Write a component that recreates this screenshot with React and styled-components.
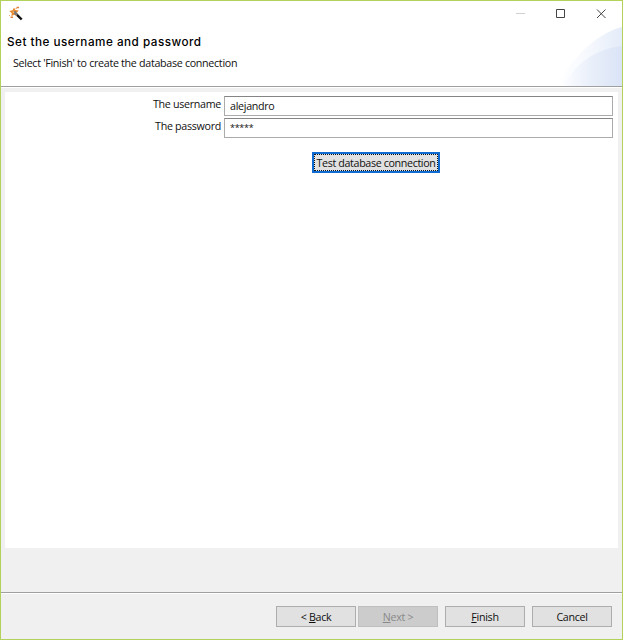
import React, { useState } from 'react';
import styled, { createGlobalStyle } from 'styled-components';

const GlobalStyle = createGlobalStyle`
  * {
    box-sizing: border-box;
  }

  body {
    margin: 0;
    background: #f0f0f0;
  }
`;

const Window = styled.div`
  display: flex;
  flex-direction: column;
  width: 623px;
  height: 640px;
  border: 1px solid #b2d25c;
  background: #f0f0f0;
  color: #101010;
  font-family: 'Open Sans', 'Noto Sans', sans-serif;
  font-size: 10.7px;
  letter-spacing: -0.3px;
`;

const Header = styled.header`
  position: relative;
  height: 86px;
  flex: none;
  background: #fff;
  border-bottom: 1px solid #a0a0a0;
  box-shadow: 0 1px 0 #fff;
`;

const Swoosh = styled.svg`
  position: absolute;
  right: 0;
  bottom: 0;
`;

const TitleBar = styled.div`
  display: flex;
  align-items: flex-start;
  justify-content: space-between;
  height: 33px;
  padding: 4px 15px 0 7px;
`;

const WindowControls = styled.div`
  display: flex;
  gap: 28px;
  padding-top: 3px;
`;

const ControlButton = styled.button`
  display: flex;
  width: 12px;
  height: 12px;
  padding: 0;
  border: 0;
  background: none;
  color: ${(props) => (props.disabled ? '#d0d0d0' : '#444')};
`;

const Title = styled.h1`
  margin: 0 0 0 6px;
  font-family: Inter, 'Liberation Sans', sans-serif;
  font-size: 11.7px;
  font-weight: 500;
  line-height: 16px;
  letter-spacing: 0.5px;
  color: #000;
  white-space: nowrap;
`;

const Subtitle = styled.p`
  margin: 5px 0 0 12px;
  line-height: 16px;
  white-space: nowrap;
`;

const Content = styled.main`
  height: 456px;
  flex: none;
  margin: 5px 4px 0;
  padding: 4px 5px 0 4px;
  background: #fff;
`;

const Field = styled.label`
  display: flex;
  justify-content: flex-end;
  gap: 3px;
  height: 22px;
`;

const FieldLabel = styled.span`
  line-height: 17px;
`;

const Input = styled.input`
  width: 389px;
  height: 20px;
  padding: ${(props) => (props.$masked ? '0 5px 2px' : '0 5px')};
  border: 1px solid #ababab;
  border-top-color: #858585;
  outline: 0;
  background: #fff;
  color: #101010;
  font: inherit;
  font-size: ${(props) => (props.$masked ? '9px' : 'inherit')};
  letter-spacing: ${(props) => (props.$masked ? '-0.3px' : 'inherit')};
`;

const TestRow = styled.div`
  display: flex;
  padding: 12px 0 0 303px;
`;

const TestButton = styled.button`
  width: 128px;
  height: 21px;
  padding: 0;
  border: 2px solid #0f6bd2;
  outline: 1px dotted #111;
  outline-offset: -3px;
  background: #e1e1e1;
  color: #101010;
  font: inherit;
  letter-spacing: -0.35px;
  white-space: nowrap;
`;

const Footer = styled.footer`
  display: flex;
  justify-content: flex-end;
  gap: 7px;
  height: 47px;
  flex: none;
  margin-top: auto;
  padding: 13px 10px 0 0;
  border-top: 1px solid #a0a0a0;
  box-shadow: inset 0 1px 0 #fff;
`;

const ButtonGroup = styled.div`
  display: flex;
  gap: 2px;
`;

const ActionButton = styled.button`
  width: 80px;
  height: 21px;
  padding: 0;
  border: 1px solid ${(props) => (props.disabled ? '#bfbfbf' : '#adadad')};
  background: ${(props) => (props.disabled ? '#cccccc' : '#e1e1e1')};
  color: ${(props) => (props.disabled ? '#8a8a8a' : '#101010')};
  font: inherit;
  letter-spacing: inherit;
`;

function WandIcon() {
  return (
    <svg width="16" height="16" viewBox="0 0 16 16">
      <path d="M8.5 9.3L13.7 14.5" stroke="#111" strokeWidth="2.4" />
      <path d="M6 2.4L7.4 5L10.7 5.5L8.6 8L9 11L6 9.8L3.4 11.3L3.8 8.3L1.3 6L4.6 5.3Z" fill="#e7892f" />
      <path d="M5.2 6.2L7.5 6L9.8 9.2L8.3 10.6L6.2 9Z" fill="#75777a" />
      <path d="M4.8 6.4H6.3V8H4.8z" fill="#f6b365" />
      <path d="M8.5 1.8H11V3.3H8.5zM2.5 11.5H5V13H2.5z" fill="#df8040" />
      <path d="M7.5 3H9V4H7.5zM1 10H2V11H1z" fill="#f0ad78" />
    </svg>
  );
}

function HeaderSwoosh() {
  return (
    <Swoosh width="64" height="59" viewBox="0 0 64 59">
      <defs>
        <linearGradient id="outer">
          <stop offset="0" stopColor="#fff" />
          <stop offset="0.5" stopColor="#f5f8fd" />
          <stop offset="1" stopColor="#e4ecf9" />
        </linearGradient>
        <linearGradient id="inner">
          <stop offset="0" stopColor="#fcfdff" />
          <stop offset="0.45" stopColor="#eaf0fa" />
          <stop offset="1" stopColor="#dae4f6" />
        </linearGradient>
      </defs>
      <path d="M0 59C12 34 36 7 64 0V59Z" fill="url(#outer)" />
      <path d="M5 59C18 37 36 22 64 19V59Z" fill="url(#inner)" />
    </Swoosh>
  );
}

export default function App() {
  const [username, setUsername] = useState('alejandro');
  const [password, setPassword] = useState('*****');

  return (
    <>
      <GlobalStyle />
      <Window>
        <Header>
          <HeaderSwoosh />
          <TitleBar>
            <WandIcon />
            <WindowControls>
              <ControlButton disabled aria-label="Minimize">
                <svg width="12" height="12" viewBox="0 0 12 12" fill="none" stroke="currentColor">
                  <path d="M1 5.5H10" />
                </svg>
              </ControlButton>
              <ControlButton aria-label="Maximize">
                <svg width="12" height="12" viewBox="0 0 12 12" fill="none" stroke="currentColor">
                  <path d="M1.5 1.5H9.5V9.5H1.5Z" />
                </svg>
              </ControlButton>
              <ControlButton aria-label="Close">
                <svg width="12" height="12" viewBox="0 0 12 12" fill="none" stroke="currentColor">
                  <path d="M2 1.5L10.5 10M10.5 1.5L2 10" />
                </svg>
              </ControlButton>
            </WindowControls>
          </TitleBar>
          <Title>Set the username and password</Title>
          <Subtitle>Select 'Finish' to create the database connection</Subtitle>
        </Header>

        <Content>
          <Field>
            <FieldLabel>The username</FieldLabel>
            <Input value={username} onChange={(e) => setUsername(e.target.value)} />
          </Field>
          <Field>
            <FieldLabel>The password</FieldLabel>
            <Input $masked value={password} onChange={(e) => setPassword(e.target.value)} />
          </Field>
          <TestRow>
            <TestButton>Test database connection</TestButton>
          </TestRow>
        </Content>

        <Footer>
          <ButtonGroup>
            <ActionButton>&lt; <u>B</u>ack</ActionButton>
            <ActionButton disabled><u>N</u>ext &gt;</ActionButton>
          </ButtonGroup>
          <ActionButton><u>F</u>inish</ActionButton>
          <ActionButton>Cancel</ActionButton>
        </Footer>
      </Window>
    </>
  );
}
